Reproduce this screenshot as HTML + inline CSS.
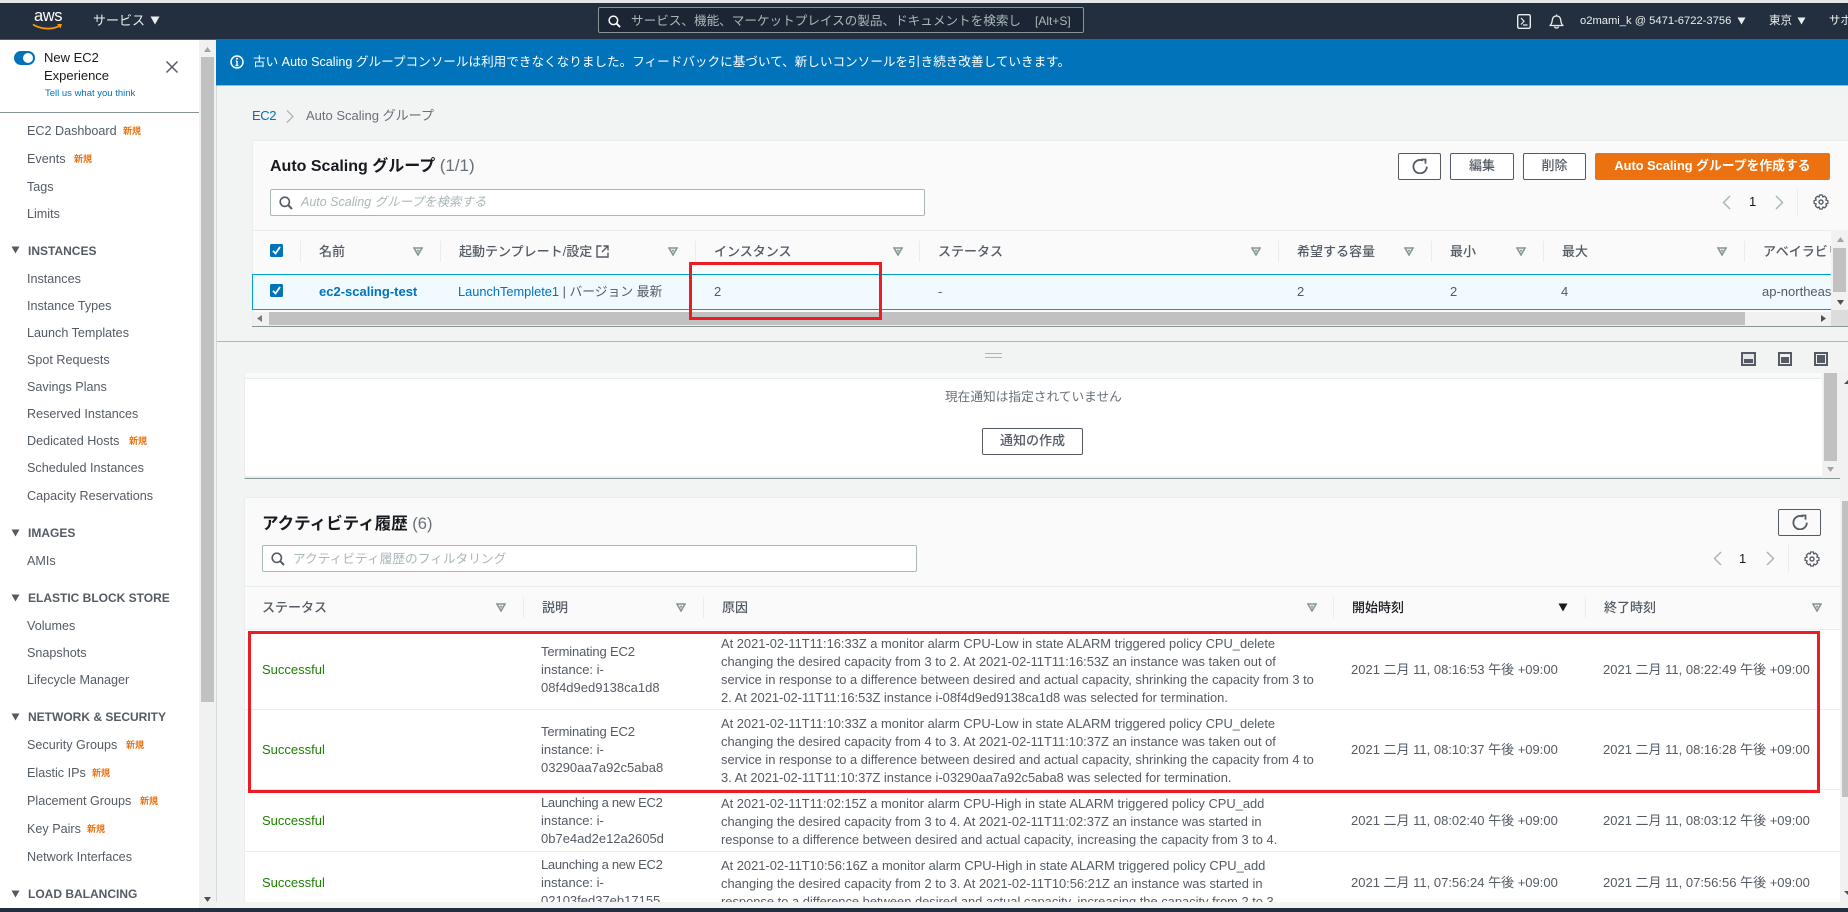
<!DOCTYPE html>
<html lang="ja"><head><meta charset="utf-8"><title>Auto Scaling グループ</title>
<style>
html,body{margin:0;padding:0;width:1848px;height:912px;overflow:hidden;background:#f2f3f3}
body{position:relative;font-family:"Liberation Sans","Noto Sans CJK JP",sans-serif;font-size:13px;color:#545b64}
.b,.t,svg.i{position:absolute}
.b{box-sizing:border-box}
.t{white-space:nowrap;line-height:18px}
.l{font-size:12.6px}
.s{font-weight:700;font-size:12px}
.n{color:#ec7211;font-size:9px;font-weight:700}
.h{font-size:13px;color:#545b64;font-weight:500}
.btn{position:absolute;box-sizing:border-box;border:1px solid #545b64;background:#fff;border-radius:2px;text-align:center;font-weight:500;line-height:24px;color:#545b64}
.d{position:absolute;width:1px;background:#eaeded}
.gr{color:#1d8102}
svg.i{overflow:visible}
</style></head><body>
<svg width="0" height="0" style="position:absolute">
<defs>
<symbol id="sort" viewBox="0 0 10 9"><path d="M1 1H9L5 8Z" fill="none" stroke="#879596" stroke-width="1.6"/><path d="M3.5 2.8H6.5L5 5.4Z" fill="#879596"/></symbol>
<symbol id="tri" viewBox="0 0 10 9"><path d="M0.5 0.5H9.5L5 8.5Z" fill="currentColor"/></symbol>
<symbol id="refresh" viewBox="0 0 16 16"><path d="M14.8 8.6A6.7 6.7 0 1 1 11 2.6" fill="none" stroke="#545b64" stroke-width="1.8"/><path d="M9.4 .6H14.4V5.6H12.6V2.4H9.4Z" fill="#545b64"/></symbol>
<symbol id="gear" viewBox="0 0 16 16"><circle cx="8" cy="8" r="2" fill="none" stroke="#545b64" stroke-width="1.4"/><path d="M6.6 1H9.4L9.8 3L11.6 2.2L13.6 4.2L12.8 6L14.9 6.6V9.4L12.8 10L13.6 11.8L11.6 13.8L9.8 13L9.4 15H6.6L6.2 13L4.4 13.8L2.4 11.8L3.2 10L1.1 9.4V6.6L3.2 6L2.4 4.2L4.4 2.2L6.2 3Z" fill="none" stroke="#545b64" stroke-width="1.3" stroke-linejoin="round"/></symbol>
<symbol id="mag" viewBox="0 0 14 14"><circle cx="5.8" cy="5.8" r="4.6" fill="none" stroke="currentColor" stroke-width="1.6"/><path d="M9.2 9.2L13 13" stroke="currentColor" stroke-width="2"/></symbol>
<symbol id="chk" viewBox="0 0 13 13"><rect width="13" height="13" rx="1.5" fill="#0073bb"/><path d="M3 6.8L5.5 9.5L10 3" fill="none" stroke="#fff" stroke-width="1.8"/></symbol>
<symbol id="lt" viewBox="0 0 9 15"><path d="M8 1L1.5 7.5L8 14" fill="none" stroke="#aab7b8" stroke-width="1.5"/></symbol>
<symbol id="rt" viewBox="0 0 9 15"><path d="M1 1L7.5 7.5L1 14" fill="none" stroke="#aab7b8" stroke-width="1.5"/></symbol>
</defs></svg>

<!-- top bar -->
<div class="b" style="left:0;top:0;width:1848px;height:3px;background:#e4e6e8"></div>
<div class="b" style="left:0;top:3px;width:1848px;height:36px;background:#232f3e"></div>
<div class="b" style="left:0;top:39px;width:1848px;height:1px;background:#545b64"></div>
<div class="t" style="left:34px;top:6px;color:#fff;font-size:16.5px;line-height:20px;letter-spacing:-.4px">aws</div>
<svg class="i" style="left:32px;top:23px" width="31" height="8" viewBox="0 0 31 8"><path d="M1 1.5C9 6.5 21 7 28 2.5" fill="none" stroke="#f90" stroke-width="1.8"/><path d="M25 1H30L28.5 5.5Z" fill="#f90"/></svg>
<div class="t" style="left:93px;top:12px;color:#eaeded;font-size:13px">サービス</div>
<svg class="i" style="left:150px;top:16px;color:#eaeded" width="10" height="9"><use href="#tri"/></svg>
<div class="b" style="left:598px;top:7px;width:486px;height:26px;background:#1b2533;border:1px solid #879596;border-radius:2px"></div>
<svg class="i" style="left:608px;top:15px;color:#fff" width="13" height="13"><use href="#mag"/></svg>
<div class="t" style="left:631px;top:12px;color:#aab7b8;font-size:12.6px">サービス、機能、マーケットプレイスの製品、ドキュメントを検索し</div>
<div class="b" style="left:1022px;top:9px;width:12px;height:22px;background:#1b2533"></div>
<div class="t" style="left:1035px;top:12px;color:#aab7b8;font-size:12px">[Alt+S]</div>
<svg class="i" style="left:1517px;top:14px" width="14" height="15" viewBox="0 0 14 15"><rect x=".7" y=".7" width="12.6" height="13.6" rx="1.5" fill="none" stroke="#eaeded" stroke-width="1.4"/><path d="M4 4L7 7.3L4 10.5M6 11H10.5" fill="none" stroke="#eaeded" stroke-width="1.2"/></svg>
<svg class="i" style="left:1549px;top:14px" width="15" height="15" viewBox="0 0 15 15"><path d="M1 11.5C3 10 3 8 3.3 6C3.6 3.3 5 2 7.5 2C10 2 11.4 3.3 11.7 6C12 8 12 10 14 11.5Z" fill="none" stroke="#eaeded" stroke-width="1.3" stroke-linejoin="round"/><path d="M5.5 12.5C5.8 14.5 9.2 14.5 9.5 12.5M7.5 .5V2" fill="none" stroke="#eaeded" stroke-width="1.3"/></svg>
<div class="t" style="left:1580px;top:12px;color:#eaeded;font-size:11.2px">o2mami_k @ 5471-6722-3756</div>
<svg class="i" style="left:1737px;top:17px;color:#eaeded" width="9" height="8"><use href="#tri"/></svg>
<div class="t" style="left:1769px;top:12px;color:#eaeded;font-size:11.5px">東京</div>
<svg class="i" style="left:1797px;top:17px;color:#eaeded" width="9" height="8"><use href="#tri"/></svg>
<div class="t" style="left:1829px;top:12px;color:#eaeded;font-size:11.5px">サポート</div>

<!-- sidebar -->
<div class="b" style="left:0;top:40px;width:199px;height:868px;background:#fff"></div>
<div class="b" style="left:199px;top:40px;width:17px;height:868px;background:#f1f1f1"></div>
<div class="b" style="left:201px;top:57px;width:13px;height:645px;background:#c1c1c1"></div>
<svg class="i" style="left:204px;top:47px" width="7" height="5"><path d="M3.5 0L7 5H0Z" fill="#a3a3a3"/></svg>
<svg class="i" style="left:204px;top:897px" width="7" height="5"><path d="M0 0H7L3.5 5Z" fill="#505050"/></svg>
<div class="b" style="left:14px;top:51px;width:21px;height:14px;background:#0073bb;border-radius:7px"></div>
<div class="b" style="left:23px;top:53px;width:10px;height:10px;background:#fff;border-radius:50%"></div>
<div class="t" style="left:44px;top:49px;font-size:13px;color:#16191f">New EC2</div>
<div class="t" style="left:44px;top:67px;font-size:13px;color:#16191f">Experience</div>
<div class="t" style="left:45px;top:85px;font-size:9.5px;color:#0073bb">Tell us what you think</div>
<svg class="i" style="left:166px;top:61px" width="12" height="12"><path d="M.5 .5L11.5 11.5M11.5 .5L.5 11.5" stroke="#545b64" stroke-width="1.5"/></svg>
<div class="b" style="left:0;top:112px;width:199px;height:1px;background:#879596"></div>

<div class="t l" style="left:27px;top:122px">EC2 Dashboard</div><div class="t n" style="left:123px;top:122px">新規</div>
<div class="t l" style="left:27px;top:150px">Events</div><div class="t n" style="left:74px;top:150px">新規</div>
<div class="t l" style="left:27px;top:178px">Tags</div>
<div class="t l" style="left:27px;top:205px">Limits</div>
<svg class="i" style="left:11px;top:246px;color:#545b64" width="9" height="8"><use href="#tri"/></svg><div class="t s" style="left:28px;top:242px">INSTANCES</div>
<div class="t l" style="left:27px;top:270px">Instances</div>
<div class="t l" style="left:27px;top:297px">Instance Types</div>
<div class="t l" style="left:27px;top:324px">Launch Templates</div>
<div class="t l" style="left:27px;top:351px">Spot Requests</div>
<div class="t l" style="left:27px;top:378px">Savings Plans</div>
<div class="t l" style="left:27px;top:405px">Reserved Instances</div>
<div class="t l" style="left:27px;top:432px">Dedicated Hosts</div><div class="t n" style="left:129px;top:432px">新規</div>
<div class="t l" style="left:27px;top:459px">Scheduled Instances</div>
<div class="t l" style="left:27px;top:487px">Capacity Reservations</div>
<svg class="i" style="left:11px;top:529px;color:#545b64" width="9" height="8"><use href="#tri"/></svg><div class="t s" style="left:28px;top:524px">IMAGES</div>
<div class="t l" style="left:27px;top:552px">AMIs</div>
<svg class="i" style="left:11px;top:594px;color:#545b64" width="9" height="8"><use href="#tri"/></svg><div class="t s" style="left:28px;top:589px">ELASTIC BLOCK STORE</div>
<div class="t l" style="left:27px;top:617px">Volumes</div>
<div class="t l" style="left:27px;top:644px">Snapshots</div>
<div class="t l" style="left:27px;top:671px">Lifecycle Manager</div>
<svg class="i" style="left:11px;top:713px;color:#545b64" width="9" height="8"><use href="#tri"/></svg><div class="t s" style="left:28px;top:708px">NETWORK &amp; SECURITY</div>
<div class="t l" style="left:27px;top:736px">Security Groups</div><div class="t n" style="left:126px;top:736px">新規</div>
<div class="t l" style="left:27px;top:764px">Elastic IPs</div><div class="t n" style="left:92px;top:764px">新規</div>
<div class="t l" style="left:27px;top:792px">Placement Groups</div><div class="t n" style="left:140px;top:792px">新規</div>
<div class="t l" style="left:27px;top:820px">Key Pairs</div><div class="t n" style="left:87px;top:820px">新規</div>
<div class="t l" style="left:27px;top:848px">Network Interfaces</div>
<svg class="i" style="left:11px;top:890px;color:#545b64" width="9" height="8"><use href="#tri"/></svg><div class="t s" style="left:28px;top:885px">LOAD BALANCING</div>

<!-- main -->
<div class="b" style="left:216px;top:40px;width:1px;height:868px;background:#d5dbdb"></div>
<div class="b" style="left:216px;top:40px;width:1632px;height:45px;background:#0073bb"></div>
<div class="b" style="left:216px;top:85px;width:1632px;height:1px;background:#aab7b8"></div>
<svg class="i" style="left:230px;top:55px" width="14" height="14" viewBox="0 0 14 14"><circle cx="7" cy="7" r="6" fill="none" stroke="#fff" stroke-width="1.5"/><path d="M7 6V10.5M5.5 10.5H8.5M5.8 6H7" stroke="#fff" stroke-width="1.4" fill="none"/><circle cx="7" cy="3.8" r="1" fill="#fff"/></svg>
<div class="t" style="left:253px;top:53px;color:#fff;font-size:12.6px">古い Auto Scaling グループコンソールは利用できなくなりました。フィードバックに基づいて、新しいコンソールを引き続き改善していきます。</div>

<div class="t" style="left:252px;top:107px;color:#0073bb;letter-spacing:-.4px">EC2</div>
<svg class="i" style="left:286px;top:110px" width="8" height="13"><path d="M1 .5L7 6.5L1 12.5" fill="none" stroke="#aab7b8" stroke-width="1.3"/></svg>
<div class="t" style="left:306px;top:107px;color:#687078">Auto Scaling グループ</div>

<!-- ASG panel -->
<div class="b" style="left:252px;top:140px;width:1596px;height:187px;background:#fafafa;border-top:1px solid #eaeded;border-left:1px solid #eaeded;border-bottom:1px solid #879596"></div>
<div class="t" style="left:270px;top:154px;font-size:16px;line-height:24px;font-weight:700;color:#16191f">Auto Scaling グループ <span style="font-weight:400;color:#687078;font-size:17px">(1/1)</span></div>
<div class="btn" style="left:1398px;top:153px;width:43px;height:27px"></div>
<svg class="i" style="left:1412px;top:158px" width="16" height="16"><use href="#refresh"/></svg>
<div class="btn" style="left:1450px;top:153px;width:64px;height:27px">編集</div>
<div class="btn" style="left:1523px;top:153px;width:63px;height:27px">削除</div>
<div class="btn" style="left:1595px;top:153px;width:235px;height:27px;background:#ec7211;border-color:#ec7211;color:#fff;font-weight:700;font-size:12.8px">Auto Scaling グループを作成する</div>
<div class="b" style="left:270px;top:189px;width:655px;height:27px;background:#fff;border:1px solid #aab7b8;border-radius:2px"></div>
<svg class="i" style="left:279px;top:196px;color:#545b64" width="14" height="14"><use href="#mag"/></svg>
<div class="t" style="left:301px;top:193px;color:#aab7b8;font-style:italic;font-size:12.5px">Auto Scaling グループを検索する</div>
<svg class="i" style="left:1722px;top:195px" width="9" height="15"><use href="#lt"/></svg>
<div class="t" style="left:1749px;top:193px;color:#16191f">1</div>
<svg class="i" style="left:1775px;top:195px" width="9" height="15"><use href="#rt"/></svg>
<div class="d" style="left:1797px;top:189px;height:27px"></div>
<svg class="i" style="left:1813px;top:194px" width="16" height="16"><use href="#gear"/></svg>
<div class="b" style="left:253px;top:230px;width:1595px;height:1px;background:#eaeded"></div>

<svg class="i" style="left:270px;top:244px" width="13" height="13"><use href="#chk"/></svg>
<div class="d" style="left:300px;top:241px;height:21px"></div>
<div class="t h" style="left:319px;top:243px">名前</div><svg class="i" style="left:413px;top:247px" width="10" height="9"><use href="#sort"/></svg>
<div class="d" style="left:440px;top:241px;height:21px"></div>
<div class="t h" style="left:459px;top:243px">起動テンプレート/設定</div>
<svg class="i" style="left:596px;top:245px" width="13" height="13" viewBox="0 0 13 13"><path d="M5.5 1H1V12H12V7.5" fill="none" stroke="#545b64" stroke-width="1.4"/><path d="M7.5 1H12V5.5M12 1L6 7" fill="none" stroke="#545b64" stroke-width="1.4"/></svg>
<svg class="i" style="left:668px;top:247px" width="10" height="9"><use href="#sort"/></svg>
<div class="d" style="left:695px;top:241px;height:21px"></div>
<div class="t h" style="left:714px;top:243px">インスタンス</div><svg class="i" style="left:893px;top:247px" width="10" height="9"><use href="#sort"/></svg>
<div class="d" style="left:919px;top:241px;height:21px"></div>
<div class="t h" style="left:938px;top:243px">ステータス</div><svg class="i" style="left:1251px;top:247px" width="10" height="9"><use href="#sort"/></svg>
<div class="d" style="left:1278px;top:241px;height:21px"></div>
<div class="t h" style="left:1297px;top:243px">希望する容量</div><svg class="i" style="left:1404px;top:247px" width="10" height="9"><use href="#sort"/></svg>
<div class="d" style="left:1431px;top:241px;height:21px"></div>
<div class="t h" style="left:1450px;top:243px">最小</div><svg class="i" style="left:1516px;top:247px" width="10" height="9"><use href="#sort"/></svg>
<div class="d" style="left:1543px;top:241px;height:21px"></div>
<div class="t h" style="left:1562px;top:243px">最大</div><svg class="i" style="left:1717px;top:247px" width="10" height="9"><use href="#sort"/></svg>
<div class="d" style="left:1744px;top:241px;height:21px"></div>
<div class="t h" style="left:1763px;top:243px">アベイラビリティーゾーン</div>

<div class="b" style="left:252px;top:274px;width:1596px;height:36px;background:#f1faff;border:1px solid #00a1c9;border-right:none"></div>
<svg class="i" style="left:270px;top:284px" width="13" height="13"><use href="#chk"/></svg>
<div class="t" style="left:319px;top:283px;color:#0073bb;font-weight:700">ec2-scaling-test</div>
<div class="t" style="left:458px;top:283px;font-size:12.8px"><span style="color:#0073bb">LaunchTemplete1</span> | バージョン 最新</div>
<div class="t" style="left:714px;top:283px">2</div>
<div class="t" style="left:938px;top:283px">-</div>
<div class="t" style="left:1297px;top:283px">2</div>
<div class="t" style="left:1450px;top:283px">2</div>
<div class="t" style="left:1561px;top:283px">4</div>
<div class="t" style="left:1762px;top:283px">ap-northeast-1a</div>

<!-- panel scrollbars -->
<div class="b" style="left:253px;top:312px;width:1595px;height:14px;background:#f1f1f1"></div>
<div class="b" style="left:269px;top:312px;width:1476px;height:13px;background:#c1c1c1"></div>
<svg class="i" style="left:257px;top:315px" width="5" height="7"><path d="M5 0V7L0 3.5Z" fill="#7a7a7a"/></svg>
<svg class="i" style="left:1821px;top:315px" width="5" height="7"><path d="M0 0V7L5 3.5Z" fill="#505050"/></svg>
<div class="b" style="left:1831px;top:230px;width:17px;height:96px;background:#f1f1f1"></div>
<div class="b" style="left:1833px;top:248px;width:13px;height:44px;background:#c1c1c1"></div>
<div class="b" style="left:1831px;top:310px;width:17px;height:16px;background:#dcdcdc"></div>
<svg class="i" style="left:1837px;top:237px" width="7" height="5"><path d="M3.5 0L7 5H0Z" fill="#a3a3a3"/></svg>
<svg class="i" style="left:1837px;top:300px" width="7" height="5"><path d="M0 0H7L3.5 5Z" fill="#505050"/></svg>
<div class="b" style="left:252px;top:326px;width:1596px;height:1px;background:#879596"></div>

<!-- splitter -->
<div class="b" style="left:217px;top:341px;width:1631px;height:1px;background:#aab7b8"></div>
<div class="b" style="left:985px;top:353px;width:17px;height:1px;background:#aab7b8"></div>
<div class="b" style="left:985px;top:357px;width:17px;height:1px;background:#aab7b8"></div>
<svg class="i" style="left:1741px;top:352px" width="15" height="14"><rect width="15" height="14" fill="#545b64"/><rect x="2" y="2" width="11" height="10" fill="#e4e7e8"/><rect x="3" y="7" width="9" height="4" fill="#545b64"/></svg>
<svg class="i" style="left:1778px;top:352px" width="14" height="14"><rect width="14" height="14" fill="#545b64"/><rect x="2" y="2" width="10" height="10" fill="#f2f3f3"/><rect x="3" y="5" width="8" height="6" fill="#545b64"/></svg>
<svg class="i" style="left:1814px;top:352px" width="14" height="14"><rect width="14" height="14" fill="#545b64"/><rect x="2" y="2" width="10" height="10" fill="#f2f3f3"/><rect x="3" y="3" width="8" height="8" fill="#545b64"/></svg>

<!-- notifications -->
<div class="b" style="left:244px;top:373px;width:1596px;height:106px;background:#fafafa;border-left:1px solid #eaeded;border-bottom:1px solid #879596"></div>
<div class="b" style="left:245px;top:378px;width:1577px;height:1px;background:#eaeded"></div>
<div class="b" style="left:245px;top:379px;width:1577px;height:97px;background:#fff"></div>
<div class="b" style="left:245px;top:476px;width:1577px;height:2px;background:#eaeded"></div>
<div class="b" style="left:1822px;top:373px;width:18px;height:105px;background:#f1f1f1"></div>
<div class="b" style="left:1824px;top:373px;width:13px;height:88px;background:#c1c1c1"></div>
<svg class="i" style="left:1827px;top:467px" width="7" height="5"><path d="M0 0H7L3.5 5Z" fill="#a3a3a3"/></svg>
<div class="t" style="left:945px;top:388px;color:#687078;font-size:12.7px">現在通知は指定されていません</div>
<div class="btn" style="left:982px;top:428px;width:101px;height:27px">通知の作成</div>

<!-- outer scrollbar -->
<div class="b" style="left:1840px;top:373px;width:8px;height:535px;background:#f1f1f1"></div>
<div class="b" style="left:1842px;top:501px;width:6px;height:296px;background:#c1c1c1"></div>
<svg class="i" style="left:1844px;top:380px" width="4" height="4"><path d="M4 0V4H0Z" fill="#505050"/></svg>
<svg class="i" style="left:1844px;top:891px" width="4" height="4"><path d="M0 0H4L4 4Z" fill="#505050"/></svg>

<!-- activity -->
<div class="b" style="left:244px;top:497px;width:1596px;height:405px;background:#fafafa;border-top:1px solid #eaeded;border-left:1px solid #eaeded"></div>
<div class="t" style="left:262px;top:512px;font-size:16.5px;line-height:24px;font-weight:700;color:#16191f">アクティビティ履歴 <span style="font-weight:400;color:#687078">(6)</span></div>
<div class="btn" style="left:1778px;top:509px;width:43px;height:27px;background:#fafafa"></div>
<svg class="i" style="left:1792px;top:514px" width="16" height="16"><use href="#refresh"/></svg>
<div class="b" style="left:262px;top:545px;width:655px;height:27px;background:#fff;border:1px solid #aab7b8;border-radius:2px"></div>
<svg class="i" style="left:271px;top:552px;color:#545b64" width="14" height="14"><use href="#mag"/></svg>
<div class="t" style="left:293px;top:550px;color:#aab7b8;font-size:12.7px">アクティビティ履歴のフィルタリング</div>
<svg class="i" style="left:1713px;top:551px" width="9" height="15"><use href="#lt"/></svg>
<div class="t" style="left:1739px;top:550px;color:#16191f">1</div>
<svg class="i" style="left:1766px;top:551px" width="9" height="15"><use href="#rt"/></svg>
<div class="d" style="left:1788px;top:545px;height:27px"></div>
<svg class="i" style="left:1804px;top:551px" width="16" height="16"><use href="#gear"/></svg>
<div class="b" style="left:245px;top:586px;width:1595px;height:1px;background:#eaeded"></div>

<div class="t h" style="left:262px;top:599px">ステータス</div><svg class="i" style="left:496px;top:603px" width="10" height="9"><use href="#sort"/></svg>
<div class="d" style="left:523px;top:597px;height:21px"></div>
<div class="t h" style="left:542px;top:599px">説明</div><svg class="i" style="left:676px;top:603px" width="10" height="9"><use href="#sort"/></svg>
<div class="d" style="left:703px;top:597px;height:21px"></div>
<div class="t h" style="left:722px;top:599px">原因</div><svg class="i" style="left:1307px;top:603px" width="10" height="9"><use href="#sort"/></svg>
<div class="d" style="left:1333px;top:597px;height:21px"></div>
<div class="t h" style="left:1352px;top:599px;color:#16191f">開始時刻</div><svg class="i" style="left:1558px;top:603px;color:#16191f" width="10" height="9"><use href="#tri"/></svg>
<div class="d" style="left:1585px;top:597px;height:21px"></div>
<div class="t h" style="left:1604px;top:599px">終了時刻</div><svg class="i" style="left:1812px;top:603px" width="10" height="9"><use href="#sort"/></svg>

<div class="b" style="left:245px;top:629px;width:1595px;height:273px;background:#fff"></div>
<div class="b" style="left:245px;top:629px;width:1595px;height:1px;background:#eaeded"></div>
<div class="b" style="left:245px;top:709px;width:1595px;height:1px;background:#eaeded"></div>
<div class="b" style="left:245px;top:789px;width:1595px;height:1px;background:#eaeded"></div>
<div class="b" style="left:245px;top:851px;width:1595px;height:1px;background:#eaeded"></div>

<div class="t gr" style="left:262px;top:661px">Successful</div>
<div class="t" style="left:541px;top:643px"><span style="letter-spacing:-.15px">Terminating EC2</span><br>instance: i-<br>08f4d9ed9138ca1d8</div>
<div class="t" style="left:721px;top:635px;font-size:12.9px">At 2021-02-11T11:16:33Z a monitor alarm CPU-Low in state ALARM triggered policy CPU_delete<br>changing the desired capacity from 3 to 2. At 2021-02-11T11:16:53Z an instance was taken out of<br>service in response to a difference between desired and actual capacity, shrinking the capacity from 3 to<br>2. At 2021-02-11T11:16:53Z instance i-08f4d9ed9138ca1d8 was selected for termination.</div>
<div class="t" style="left:1351px;top:661px">2021 二月 11, 08:16:53 午後 +09:00</div>
<div class="t" style="left:1603px;top:661px">2021 二月 11, 08:22:49 午後 +09:00</div>

<div class="t gr" style="left:262px;top:741px">Successful</div>
<div class="t" style="left:541px;top:723px"><span style="letter-spacing:-.15px">Terminating EC2</span><br>instance: i-<br>03290aa7a92c5aba8</div>
<div class="t" style="left:721px;top:715px;font-size:12.9px">At 2021-02-11T11:10:33Z a monitor alarm CPU-Low in state ALARM triggered policy CPU_delete<br>changing the desired capacity from 4 to 3. At 2021-02-11T11:10:37Z an instance was taken out of<br>service in response to a difference between desired and actual capacity, shrinking the capacity from 4 to<br>3. At 2021-02-11T11:10:37Z instance i-03290aa7a92c5aba8 was selected for termination.</div>
<div class="t" style="left:1351px;top:741px">2021 二月 11, 08:10:37 午後 +09:00</div>
<div class="t" style="left:1603px;top:741px">2021 二月 11, 08:16:28 午後 +09:00</div>

<div class="t gr" style="left:262px;top:812px">Successful</div>
<div class="t" style="left:541px;top:794px"><span style="letter-spacing:-.3px">Launching a new EC2</span><br>instance: i-<br>0b7e4ad2e12a2605d</div>
<div class="t" style="left:721px;top:795px;font-size:12.9px">At 2021-02-11T11:02:15Z a monitor alarm CPU-High in state ALARM triggered policy CPU_add<br>changing the desired capacity from 3 to 4. At 2021-02-11T11:02:37Z an instance was started in<br>response to a difference between desired and actual capacity, increasing the capacity from 3 to 4.</div>
<div class="t" style="left:1351px;top:812px">2021 二月 11, 08:02:40 午後 +09:00</div>
<div class="t" style="left:1603px;top:812px">2021 二月 11, 08:03:12 午後 +09:00</div>

<div class="t gr" style="left:262px;top:874px">Successful</div>
<div class="t" style="left:541px;top:856px"><span style="letter-spacing:-.3px">Launching a new EC2</span><br>instance: i-<br>02103fed37eb17155</div>
<div class="t" style="left:721px;top:857px;font-size:12.9px">At 2021-02-11T10:56:16Z a monitor alarm CPU-High in state ALARM triggered policy CPU_add<br>changing the desired capacity from 2 to 3. At 2021-02-11T10:56:21Z an instance was started in<br>response to a difference between desired and actual capacity, increasing the capacity from 2 to 3.</div>
<div class="t" style="left:1351px;top:874px">2021 二月 11, 07:56:24 午後 +09:00</div>
<div class="t" style="left:1603px;top:874px">2021 二月 11, 07:56:56 午後 +09:00</div>

<!-- bottom -->
<div class="b" style="left:216px;top:902px;width:1632px;height:6px;background:#f2f3f3"></div>
<div class="b" style="left:1842px;top:902px;width:6px;height:6px;background:#f1f1f1"></div>
<div class="b" style="left:0;top:908px;width:1848px;height:4px;background:#232f3e"></div>

<!-- red annotation boxes -->
<div class="b" style="left:689px;top:262px;width:193px;height:58px;border:3px solid #ed1c24"></div>
<div class="b" style="left:248px;top:631px;width:1572px;height:162px;border:3px solid #ed1c24"></div>
</body></html>
